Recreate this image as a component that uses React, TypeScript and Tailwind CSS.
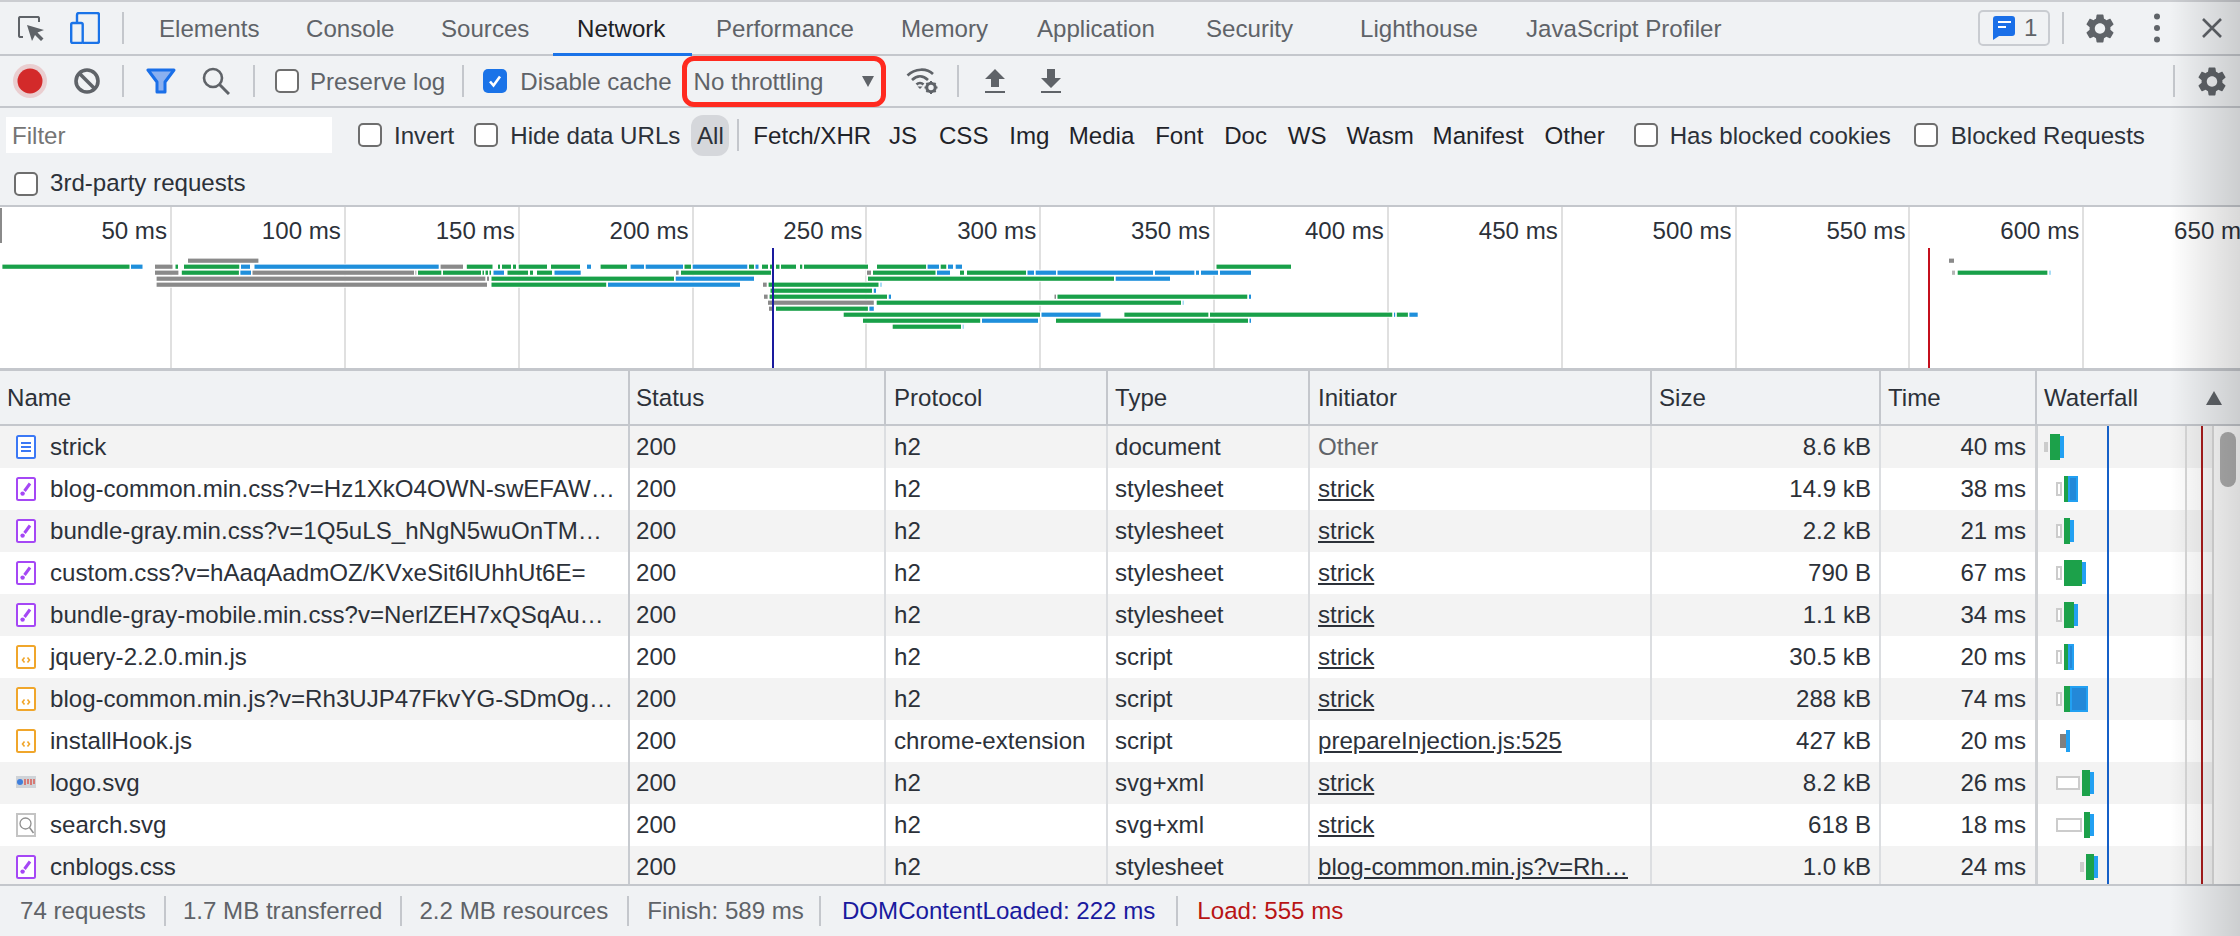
import React from "react";

const gearPath =
  "M19.14 12.94c.04-.3.06-.61.06-.94 0-.32-.02-.64-.07-.94l2.03-1.58c.18-.14.23-.41.12-.61l-1.92-3.32c-.12-.22-.37-.29-.59-.22l-2.39.96c-.5-.38-1.03-.7-1.62-.94l-.36-2.54c-.04-.24-.24-.41-.48-.41h-3.84c-.24 0-.43.17-.47.41l-.36 2.54c-.59.24-1.13.57-1.62.94l-2.39-.96c-.22-.08-.47 0-.59.22L2.74 8.87c-.12.21-.08.47.12.61l2.03 1.58c-.05.3-.09.63-.09.94s.02.64.07.94l-2.03 1.58c-.18.14-.23.41-.12.61l1.92 3.32c.12.22.37.29.59.22l2.39-.96c.5.38 1.03.7 1.62.94l.36 2.54c.05.24.24.41.48.41h3.84c.24 0 .44-.17.47-.41l.36-2.54c.59-.24 1.13-.56 1.62-.94l2.39.96c.22.08.47 0 .59-.22l1.92-3.32c.12-.22.07-.47-.12-.61l-2.01-1.58zM12 15.6c-1.98 0-3.6-1.62-3.6-3.6s1.62-3.6 3.6-3.6 3.6 1.62 3.6 3.6-1.62 3.6-3.6 3.6z";

const Gear = ({ className }: { className: string }) => (
  <svg viewBox="2.4 2 19.2 20" className={className}>
    <path d={gearPath} fill="#5f6368" />
  </svg>
);

const Divider = ({ className = "" }: { className?: string }) => (
  <div className={`w-[2px] h-[32px] shrink-0 bg-[#c4c7cc] ${className}`} />
);

const Check = ({ className = "" }: { className?: string }) => (
  <div className={`w-[24px] h-[24px] shrink-0 rounded-[5px] border-2 border-[#6e6e6e] bg-white ${className}`} />
);

type Tab = { name: string; w: number; active?: boolean };
const tabs: Tab[] = [
  { name: "Elements", w: 147 },
  { name: "Console", w: 135 },
  { name: "Sources", w: 136 },
  { name: "Network", w: 139, active: true },
  { name: "Performance", w: 185 },
  { name: "Memory", w: 136 },
  { name: "Application", w: 169 },
  { name: "Security", w: 154 },
  { name: "Lighthouse", w: 166 },
  { name: "JavaScript Profiler", w: 300 },
];

const typeFilters: [string, number][] = [
  ["JS", 17],
  ["CSS", 21],
  ["Img", 20],
  ["Media", 18.5],
  ["Font", 20],
  ["Doc", 20],
  ["WS", 20],
  ["Wasm", 19],
  ["Manifest", 18],
  ["Other", 20],
];

type Kind = "doc" | "css" | "js" | "logo" | "search";
const rows: { icon: Kind; name: string; protocol: string; type: string; initiator: string; size: string; time: string }[] = [
  { icon: "doc", name: "strick", protocol: "h2", type: "document", initiator: "Other", size: "8.6 kB", time: "40 ms" },
  { icon: "css", name: "blog-common.min.css?v=Hz1XkO4OWN-swEFAW…", protocol: "h2", type: "stylesheet", initiator: "strick", size: "14.9 kB", time: "38 ms" },
  { icon: "css", name: "bundle-gray.min.css?v=1Q5uLS_hNgN5wuOnTM…", protocol: "h2", type: "stylesheet", initiator: "strick", size: "2.2 kB", time: "21 ms" },
  { icon: "css", name: "custom.css?v=hAaqAadmOZ/KVxeSit6lUhhUt6E=", protocol: "h2", type: "stylesheet", initiator: "strick", size: "790 B", time: "67 ms" },
  { icon: "css", name: "bundle-gray-mobile.min.css?v=NerlZEH7xQSqAu…", protocol: "h2", type: "stylesheet", initiator: "strick", size: "1.1 kB", time: "34 ms" },
  { icon: "js", name: "jquery-2.2.0.min.js", protocol: "h2", type: "script", initiator: "strick", size: "30.5 kB", time: "20 ms" },
  { icon: "js", name: "blog-common.min.js?v=Rh3UJP47FkvYG-SDmOg…", protocol: "h2", type: "script", initiator: "strick", size: "288 kB", time: "74 ms" },
  { icon: "js", name: "installHook.js", protocol: "chrome-extension", type: "script", initiator: "prepareInjection.js:525", size: "427 kB", time: "20 ms" },
  { icon: "logo", name: "logo.svg", protocol: "h2", type: "svg+xml", initiator: "strick", size: "8.2 kB", time: "26 ms" },
  { icon: "search", name: "search.svg", protocol: "h2", type: "svg+xml", initiator: "strick", size: "618 B", time: "18 ms" },
  { icon: "css", name: "cnblogs.css", protocol: "h2", type: "stylesheet", initiator: "blog-common.min.js?v=Rh…", size: "1.0 kB", time: "24 ms" },
];

const FileIcon = ({ kind }: { kind: Kind }) => {
  if (kind === "doc")
    return (
      <svg viewBox="0 0 20 24" className="w-[20px] h-[24px] shrink-0">
        <rect x="1" y="1" width="18" height="22" rx="1.5" fill="#fff" stroke="#3b78f5" strokeWidth="2" />
        <path d="M5 8h10M5 12h10M5 16h10" stroke="#3b78f5" strokeWidth="2" />
      </svg>
    );
  if (kind === "css")
    return (
      <svg viewBox="0 0 20 24" className="w-[20px] h-[24px] shrink-0">
        <rect x="1" y="1" width="18" height="22" rx="1.5" fill="#fff" stroke="#a547f5" strokeWidth="2" />
        <path d="M14 6.5 8.5 14" stroke="#a547f5" strokeWidth="3" />
        <circle cx="6.6" cy="16.6" r="2.2" fill="#a547f5" />
      </svg>
    );
  if (kind === "js")
    return (
      <svg viewBox="0 0 20 24" className="w-[20px] h-[24px] shrink-0">
        <rect x="1" y="1" width="18" height="22" rx="1.5" fill="#fff" stroke="#f0a62b" strokeWidth="2" />
        <path d="M8.5 12.5 6.5 15l2 2.5M11.5 12.5l2 2.5-2 2.5" fill="none" stroke="#f0a62b" strokeWidth="1.6" />
      </svg>
    );
  if (kind === "logo")
    return (
      <svg viewBox="0 0 20 24" className="w-[20px] h-[24px] shrink-0">
        <rect x="0" y="5" width="20" height="12" fill="#cfd3d8" />
        <circle cx="4" cy="11" r="3" fill="#3f7fdc" />
        <path d="M9 8v6M12 8v5M15 8v6M18 8v5" stroke="#d9534a" strokeWidth="1.4" />
      </svg>
    );
  return (
    <svg viewBox="0 0 20 24" className="w-[20px] h-[24px] shrink-0">
      <rect x="1" y="1" width="18" height="22" fill="#fff" stroke="#c4c4c4" strokeWidth="2" />
      <circle cx="9.5" cy="10.5" r="5.5" fill="none" stroke="#8f8f8f" strokeWidth="1.3" />
      <path d="m13.5 14.5 4 5.5" stroke="#8f8f8f" strokeWidth="1.5" />
    </svg>
  );
};

const G = "#19a049";
const B = "#1f8fdb";
const A = "#8a8a8a";
// [color, x1, x2]
const overview: [string, number, number][][] = [
  [[A, 188, 258.4], [A, 1949, 1954]],
  [
    [G, 2.4, 130], [B, 131, 142.5], [A, 155, 172.5], [G, 175.5, 178], [G, 184, 239.5], [B, 241, 250], [B, 254.5, 438.7], [A, 440.6, 463],
    [G, 466.8, 492.5], [G, 498, 500], [G, 502, 511], [G, 513, 516], [G, 518.7, 547], [G, 551, 580], [B, 587, 591], [G, 600.6, 627],
    [B, 630.6, 644], [B, 645.7, 683], [G, 684.5, 691], [B, 692.7, 747.5], [G, 749, 754.5], [B, 755.5, 758.5], [G, 762, 768], [G, 770, 774],
    [G, 776, 780], [G, 781, 796], [G, 800, 802.5], [G, 804, 868], [G, 877, 926.6], [B, 927.6, 939], [G, 940.7, 946.5], [B, 948, 953], [B, 955.7, 962], [G, 1216.5, 1291],
  ],
  [
    [A, 155, 178.4], [G, 181.8, 239], [B, 240.4, 251.6], [A, 252.5, 414], [A, 415.5, 416.5], [G, 418, 441.6], [G, 443, 481], [G, 482.5, 484], [G, 485.5, 488], [G, 489.5, 491],
    [B, 493.5, 504], [G, 507.5, 528], [G, 530, 533], [G, 537, 552], [B, 554.5, 580.7], [A, 676, 678.6], [G, 681, 771], [A, 867, 871], [G, 873, 936], [B, 937, 950], [G, 960, 964],
    [G, 967, 1026], [B, 1027.5, 1034], [B, 1035.7, 1056], [B, 1057.5, 1153], [B, 1155, 1194.7], [B, 1196, 1199], [B, 1201, 1218], [B, 1220, 1251],
    ["#b5b5b5", 1952, 1955], [G, 1957.7, 2047.7], ["#a9dcf5", 2049, 2051],
  ],
  [[A, 156.6, 485.7], [A, 487, 489], [G, 491.5, 674], [B, 675.7, 754], [G, 868, 1114], [B, 1115.7, 1170]],
  [[A, 156.6, 487], [G, 491.5, 606.4], [B, 608, 740], [A, 763, 766.7], [G, 768.6, 879], ["#a9dcf5", 880, 882]],
  [[G, 770.5, 872], [B, 873.8, 876]],
  [[A, 764, 767.6], [G, 769.6, 887], [B, 888.8, 891], [A, 1054.5, 1056], [G, 1057.5, 1247.5], [B, 1249, 1251]],
  [[A, 768, 873.8], [G, 876.7, 1182], ["#a9dcf5", 1182.5, 1184]],
  [[A, 769, 772], [G, 776, 868], [B, 869.4, 873.8]],
  [[G, 843.7, 1040], [B, 1041.5, 1100.6], [G, 1124.4, 1208.7], [G, 1210, 1392.5], [B, 1394, 1395.5], [G, 1396.8, 1408], [B, 1409.4, 1417.7]],
  [[G, 863, 980.4], [B, 982, 1038], [G, 1056, 1248], [B, 1249.5, 1251]],
  [[G, 892.7, 962], ["#a9dcf5", 962.5, 964]],
];

const outlines: [number, number, number, number][] = [
  [2056, 2062, 482, 496], [2056, 2062, 524, 538], [2056, 2062, 566, 580], [2056, 2062, 608, 622], [2056, 2062, 650, 664], [2056, 2062, 692, 706], [2056, 2080, 776, 790], [2056, 2082, 818, 832],
];
const wf: [string, number, number, number, number][] = [
  ["#cccccc", 2044, 2048, 442, 452], ["#1ca14a", 2050, 2060, 434, 460], ["#22a0f2", 2060, 2064, 436, 458],
  ["#1ca14a", 2064, 2068, 476, 502], ["#22a0f2", 2068, 2078, 476, 502], ["#2388d8", 2070, 2076, 478, 500],
  ["#1ca14a", 2064, 2070, 518, 544], ["#22a0f2", 2070, 2074, 520, 542],
  ["#1ca14a", 2064, 2082, 560, 586], ["#22a0f2", 2082, 2086, 562, 584],
  ["#1ca14a", 2064, 2074, 602, 628], ["#22a0f2", 2074, 2078, 604, 626],
  ["#1ca14a", 2064, 2068, 644, 670], ["#22a0f2", 2068, 2074, 644, 670], ["#2388d8", 2070, 2072, 646, 668],
  ["#1ca14a", 2064, 2070, 686, 712], ["#22a0f2", 2070, 2088, 686, 712], ["#2388d8", 2072, 2086, 688, 710],
  ["#808080", 2060, 2066, 734, 748], ["#22a0f2", 2066, 2070, 730, 752],
  ["#1ca14a", 2082, 2090, 770, 796], ["#22a0f2", 2090, 2094, 772, 794],
  ["#1ca14a", 2084, 2090, 812, 838], ["#22a0f2", 2090, 2094, 814, 836],
  ["#cccccc", 2080, 2084, 862, 872], ["#1ca14a", 2086, 2094, 854, 880], ["#22a0f2", 2094, 2098, 856, 878],
];

const labels = ["50 ms", "100 ms", "150 ms", "200 ms", "250 ms", "300 ms", "350 ms", "400 ms", "450 ms", "500 ms", "550 ms", "600 ms", "650 ms"];

const cols = ["w-[630px]", "w-[256px]", "w-[222px]", "w-[202px]", "w-[342px]", "w-[229px]", "w-[156px]", "flex-1"];
const headPad = ["pl-[7px]", "pl-[6px]", "pl-[8px]", "pl-[7px]", "pl-[8px]", "pl-[7px]", "pl-[7px]", "pl-[7px]"];

export default function App() {
  return (
    <div className="relative w-[2240px] h-[936px] overflow-hidden bg-[#f0f2f4] [font-family:'Liberation_Sans',Arial,sans-serif] text-[24.1px] leading-none whitespace-nowrap text-[#2c3139]">
      <div className="h-[2px] bg-[#cbcdd1]" />

      {/* Tabs */}
      <div className="h-[54px] flex items-center border-b-2 border-[#c4c7cc] text-[#5f6368]">
        <svg viewBox="0 0 30 26" className="ml-[17px] w-[30px] h-[26px] shrink-0">
          <path d="M6 22H3a2 2 0 0 1-1-1V3a2 2 0 0 1 1-1h18a2 2 0 0 1 1 1v4" fill="none" stroke="#5f6368" strokeWidth="2" />
          <path d="M10 10l17 5-6.5 2.5 6 6-2.5 2.5-6-6L15 26z" fill="#5f6368" />
        </svg>
        <svg viewBox="0 0 30 32" className="ml-[23px] w-[30px] h-[32px] shrink-0">
          <path d="M7 10V3a2 2 0 0 1 2-2h18a2 2 0 0 1 2 2v26a2 2 0 0 1-2 2H13" fill="none" stroke="#1a73e8" strokeWidth="2.4" />
          <rect x="1.2" y="11" width="11.5" height="20" rx="1.5" fill="none" stroke="#1a73e8" strokeWidth="2.4" />
        </svg>
        <Divider className="ml-[22px]" />
        <div className="ml-[11px] flex items-center self-start">
          {tabs.map((t) => (
            <div
              key={t.name}
              style={{ width: t.w }}
              className={`h-[54px] shrink-0 flex items-center pl-[24px] pt-[1px] ${t.active ? "border-b-[3px] border-[#1a73e8] text-[#202124] pt-[4px]" : ""}`}
            >
              {t.name}
            </div>
          ))}
        </div>
        <div className="ml-auto flex items-center">
          <div className="w-[72px] h-[36px] rounded-[5px] border-2 border-[#c9ccd1] flex items-center">
            <svg viewBox="0 0 22 24" className="ml-[13px] w-[22px] h-[24px] shrink-0">
              <path d="M3 0h16a3 3 0 0 1 3 3v14a3 3 0 0 1-3 3H6l-6 4V3a3 3 0 0 1 3-3z" fill="#1a6fe8" />
              <path d="M5 6h13M5 11h8" stroke="#fff" strokeWidth="2" />
            </svg>
            <span className="ml-[9px] text-[#5f6368]">1</span>
          </div>
          <Divider className="ml-[12px]" />
          <Gear className="ml-[22px] w-[28px] h-[29px]" />
          <svg viewBox="0 0 8 30" className="ml-[39px] w-[8px] h-[30px]">
            <circle cx="4" cy="3.5" r="3" fill="#5f6368" />
            <circle cx="4" cy="15" r="3" fill="#5f6368" />
            <circle cx="4" cy="26.5" r="3" fill="#5f6368" />
          </svg>
          <svg viewBox="0 0 20 20" className="ml-[41px] mr-[18px] w-[20px] h-[20px]">
            <path d="M1 1l18 18M19 1 1 19" stroke="#5f6368" strokeWidth="2.6" />
          </svg>
        </div>
      </div>

      {/* Toolbar */}
      <div className="h-[52px] flex items-center border-b-2 border-[#c4c7cc] text-[#5f6368]">
        <svg viewBox="0 0 36 36" className="ml-[12px] w-[36px] h-[36px] shrink-0">
          <circle cx="18" cy="18" r="17" fill="#d32f2f" opacity="0.18" />
          <circle cx="18" cy="18" r="12.5" fill="#d32a2a" />
        </svg>
        <svg viewBox="0 0 26 26" className="ml-[26px] w-[26px] h-[26px] shrink-0">
          <circle cx="13" cy="13" r="11" fill="none" stroke="#5f6368" strokeWidth="3.6" />
          <path d="M5.5 5.5l15 15" stroke="#5f6368" strokeWidth="3.6" />
        </svg>
        <Divider className="ml-[22px]" />
        <svg viewBox="0 0 30 26" className="ml-[22px] w-[30px] h-[26px] shrink-0">
          <path d="M2 2h26l-9 12v10h-8V14z" fill="#8ab0f0" stroke="#1a6fe8" strokeWidth="3" strokeLinejoin="round" />
        </svg>
        <svg viewBox="0 0 28 28" className="ml-[26px] w-[28px] h-[28px] shrink-0">
          <circle cx="11" cy="11" r="9" fill="none" stroke="#5f6368" strokeWidth="2.6" />
          <path d="M17.5 17.5 27 27" stroke="#5f6368" strokeWidth="3" />
        </svg>
        <Divider className="ml-[23px]" />
        <Check className="ml-[20px]" />
        <span className="ml-[11px] mt-[3px]">Preserve log</span>
        <Divider className="ml-[17px]" />
        <div className="ml-[19px] w-[24px] h-[24px] shrink-0 rounded-[5px] bg-[#1a73e8] flex items-center justify-center">
          <svg viewBox="0 0 16 16" className="w-[16px] h-[16px]">
            <path d="M3 8.5 6.5 12.5 13 3.5" fill="none" stroke="#fff" strokeWidth="2.6" />
          </svg>
        </div>
        <span className="ml-[13px] mt-[3px]">Disable cache</span>
        <div className="ml-[22px] w-[192px] flex items-center justify-between shrink-0">
          <span className="mt-[3px]">No throttling</span>
          <svg viewBox="0 0 12 12" className="w-[12px] h-[12px] mr-[12px]">
            <path d="M0 1h12L6 12z" fill="#5f6368" />
          </svg>
        </div>
        <svg viewBox="0 0 32 28" className="ml-[20px] w-[32px] h-[28px] shrink-0">
          <path d="M1.5 8.5C9 1 21 1 27 7M6 13c5-5 11-5 16 0M10.5 17.5c2-2 5-2 7 0" fill="none" stroke="#5f6368" strokeWidth="2.6" />
          <path d="M11.5 19.5 14 22l2.5-2.5z" fill="#5f6368" />
          <circle cx="25" cy="20.5" r="4.2" fill="none" stroke="#5f6368" strokeWidth="3" />
          <path d="M25 14v2.5M25 24.5V27M18.5 20.5H21M29 20.5h2.5M20.4 16l1.8 1.8M27.8 23.3l1.8 1.8M20.4 25l1.8-1.8M27.8 17.8l1.8-1.8" stroke="#5f6368" strokeWidth="2" />
        </svg>
        <Divider className="ml-[19px]" />
        <svg viewBox="0 0 20 24" className="ml-[26px] w-[20px] h-[24px] shrink-0">
          <path d="M10 0l10 10h-6v8H6v-8H0z" fill="#5f6368" />
          <path d="M0 23h20" stroke="#5f6368" strokeWidth="2" />
        </svg>
        <svg viewBox="0 0 20 24" className="ml-[36px] w-[20px] h-[24px] shrink-0">
          <path d="M6 0h8v9h6L10 19 0 9h6z" fill="#5f6368" />
          <path d="M0 23h20" stroke="#5f6368" strokeWidth="2" />
        </svg>
        <div className="ml-auto flex items-center">
          <Divider />
          <Gear className="ml-[23px] mr-[14px] w-[28px] h-[29px]" />
        </div>
      </div>

      {/* Filter rows */}
      <div className="h-[54px] flex items-center">
        <div className="ml-[6px] w-[326px] h-[36px] bg-white text-[#757575] pl-[6px] pt-[3px] flex items-center shrink-0">Filter</div>
        <Check className="ml-[26px]" />
        <span className="ml-[12px] mt-[2px]">Invert</span>
        <Check className="ml-[20px]" />
        <span className="ml-[12px] mt-[2px]">Hide data URLs</span>
        <div className="ml-[11px] w-[38px] h-[41px] pt-[2px] rounded-[12px] bg-[#d5d7db] flex items-center justify-center shrink-0">All</div>
        <div className="ml-[8px] w-[2px] h-[32px] bg-[#c4c7cc] shrink-0" />
        <div className="flex items-center text-[#1f2329] mt-[2px]">
          <span className="ml-[14px]">Fetch/XHR</span>
          {typeFilters.map(([t, m]) => (
            <span key={t} style={{ marginLeft: m + 0.8 }}>{t}</span>
          ))}
        </div>
        <Check className="ml-[29px]" />
        <span className="ml-[12px] mt-[2px]">Has blocked cookies</span>
        <Check className="ml-[23px]" />
        <span className="ml-[13px] mt-[2px]">Blocked Requests</span>
      </div>
      <div className="h-[43px] flex items-center">
        <Check className="ml-[14px]" />
        <span className="ml-[12px]">3rd-party requests</span>
      </div>
      <div className="h-[2px] bg-[#c4c7cc]" />

      {/* Overview timeline */}
      <div className="relative h-[161px] bg-white overflow-hidden flex">
        {labels.map((l, i) => (
          <div
            key={l}
            className={`shrink-0 h-full border-r-2 border-[#e0e0e0] text-right pr-[3px] pt-[12px] ${i === 0 ? "w-[172px]" : "w-[173.85px]"}`}
          >
            {l}
          </div>
        ))}
        <svg viewBox="0 207 2240 161" className="absolute left-0 top-0 w-[2240px] h-[161px]">
          <rect x="0" y="208" width="2" height="35" fill="#8a8a8a" />
          {overview.map((row, k) =>
            row.map(([c, a, b], i) => (
              <g key={`${k}-${i}`}>
                <rect x={a - 1.5} y={257.7 + 6 * k} width={b - a + 3} height={6} fill="#fff" />
                <rect x={a} y={258.6 + 6 * k} width={b - a} height={4.2} fill={c} />
              </g>
            )),
          )}
          <rect x="772" y="248" width="2" height="120" fill="#1a1a9e" />
          <rect x="1928" y="248" width="2" height="120" fill="#c40f1c" />
        </svg>
      </div>
      <div className="h-[3px] bg-[#c4c7cc]" />

      {/* Table header */}
      <div className="h-[55px] flex border-b-2 border-[#c4c7cc]">
        {["Name", "Status", "Protocol", "Type", "Initiator", "Size", "Time", "Waterfall"].map((h, i) => (
          <div key={h} className={`${cols[i]} ${headPad[i]} ${i === 7 ? "" : "border-r-2 border-[#c4c7cc]"} shrink-0 flex items-center`}>
            <span className="mt-[1px]">{h}</span>
            {i === 7 && (
              <svg viewBox="0 0 16 14" className="ml-auto mr-[18px] w-[16px] h-[14px]">
                <path d="M8 0l8 14H0z" fill="#5f6368" />
              </svg>
            )}
          </div>
        ))}
      </div>

      {/* Table body */}
      <div className="relative h-[458px] overflow-hidden bg-white">
        {rows.map((r, i) => (
          <div key={r.name} className={`w-[2212px] h-[42px] flex items-center ${i % 2 === 0 ? "bg-[#f3f3f3]" : "bg-white"}`}>
            <div className={`${cols[0]} h-full shrink-0 flex items-center pl-[16px] border-r-2 border-[#c8cbd0]`}>
              <FileIcon kind={r.icon} />
              <span className="ml-[14px] mt-[1px]">{r.name}</span>
            </div>
            <div className={`${cols[1]} h-full shrink-0 flex items-center pl-[6px] pt-[1px] border-r-2 border-[#dcdee1]`}>200</div>
            <div className={`${cols[2]} h-full shrink-0 flex items-center pl-[8px] pt-[1px] border-r-2 border-[#dcdee1]`}>{r.protocol}</div>
            <div className={`${cols[3]} h-full shrink-0 flex items-center pl-[7px] pt-[1px] border-r-2 border-[#dcdee1]`}>{r.type}</div>
            <div className={`${cols[4]} h-full shrink-0 flex items-center pl-[8px] pt-[1px] border-r-2 border-[#dcdee1]`}>
              <span className={r.initiator === "Other" ? "text-[#5f6368]" : "underline"}>{r.initiator}</span>
            </div>
            <div className={`${cols[5]} h-full shrink-0 flex items-center justify-end pr-[8px] pt-[1px] border-r-2 border-[#dcdee1]`}>{r.size}</div>
            <div className={`${cols[6]} h-full shrink-0 flex items-center justify-end pr-[9px] pt-[1px] border-r-2 border-[#dcdee1]`}>{r.time}</div>
          </div>
        ))}
        <svg viewBox="2035 426 205 458" className="absolute left-[2035px] top-0 w-[205px] h-[458px]">
          <rect x="2035" y="426" width="3" height="458" fill="#cfd1d4" />
          <rect x="2107" y="426" width="2" height="458" fill="#1560c8" />
          <rect x="2185" y="426" width="2" height="458" fill="#d8d8d8" />
          <rect x="2201" y="426" width="2" height="458" fill="#a81c1c" />
          <rect x="2212" y="426" width="2" height="458" fill="#dadada" />
          {outlines.map(([a, b, t, d], i) => (
            <rect key={i} x={a + 1} y={t + 1} width={b - a - 2} height={d - t - 2} fill="#fff" stroke="#cccccc" strokeWidth="2" />
          ))}
          {wf.map(([c, a, b, t, d], i) => (
            <rect key={i} x={a} y={t} width={b - a} height={d - t} fill={c} />
          ))}
          <rect x="2220" y="432" width="16" height="55" rx="8" fill="#b0b0b0" />
        </svg>
      </div>

      {/* Status bar */}
      <div className="h-[52px] flex items-center border-t-2 border-[#c4c7cc] text-[#5f6368]">
        <span className="ml-[20px] mt-[1px]">74 requests</span>
        <div className="ml-[18px] w-[2px] h-[30px] bg-[#c4c7cc]" />
        <span className="ml-[17px] mt-[1px]">1.7 MB transferred</span>
        <div className="ml-[18px] w-[2px] h-[30px] bg-[#c4c7cc]" />
        <span className="ml-[17px] mt-[1px]">2.2 MB resources</span>
        <div className="ml-[19px] w-[2px] h-[30px] bg-[#c4c7cc]" />
        <span className="ml-[18px] mt-[1px]">Finish: 589 ms</span>
        <div className="ml-[15px] w-[2px] h-[30px] bg-[#c4c7cc]" />
        <span className="ml-[21px] mt-[1px] text-[#1a1a9e]">DOMContentLoaded: 222 ms</span>
        <div className="ml-[21px] w-[2px] h-[30px] bg-[#c4c7cc]" />
        <span className="ml-[19px] mt-[1px] text-[#b81414]">Load: 555 ms</span>
      </div>

      {/* Red annotation around the throttling select */}
      <div className="absolute left-[682px] top-[56px] w-[204px] h-[51px] rounded-[12px] border-[5px] border-[#ff2a1f]" />

      {/* Screen-edge shadow */}
      <div className="absolute right-0 top-0 w-[70px] h-full bg-linear-to-r from-transparent to-black/15 pointer-events-none" />
    </div>
  );
}
